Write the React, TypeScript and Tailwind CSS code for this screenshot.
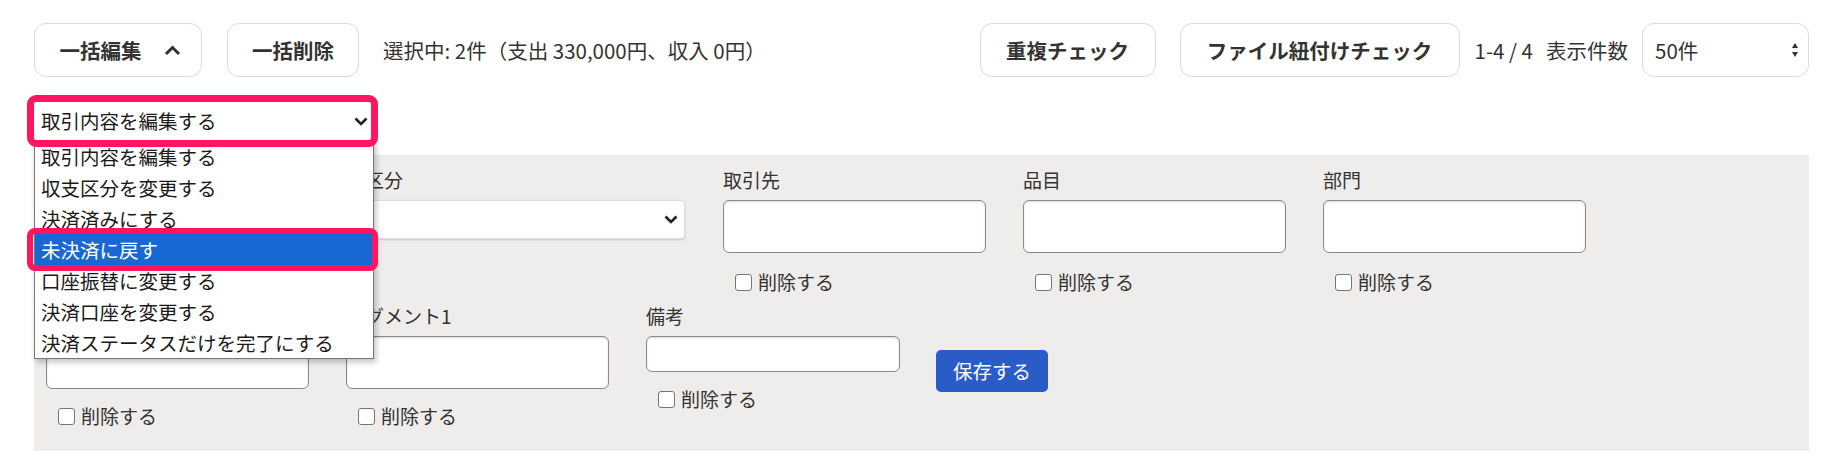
import React from "react";

const options = [
  "取引内容を編集する",
  "収支区分を変更する",
  "決済済みにする",
  "未決済に戻す",
  "口座振替に変更する",
  "決済口座を変更する",
  "決済ステータスだけを完了にする",
];

const DeleteCheck = ({ top }: { top: string }) => (
  <div className={`${top} ml-[12px] flex h-[24px] items-center gap-[6px] text-[19px] text-[#333]`}>
    <span className="h-[17px] w-[17px] rounded-[3px] border border-[#767676] bg-white" />
    <span>削除する</span>
  </div>
);

const Field = ({
  label,
  check,
  checkTop = "mt-[17px]",
  inputClass = "h-[53px] w-[263px]",
}: {
  label?: string;
  check?: boolean;
  checkTop?: string;
  inputClass?: string;
}) => (
  <div className="flex flex-col">
    <div className="mb-[8px] h-[24px] text-[19px] leading-[24px] text-[#333]">{label}</div>
    <div
      className={`${inputClass} rounded-[6px] border border-[#8a8a8a] bg-white shadow-[inset_0_1px_2px_rgba(0,0,0,0.15)]`}
    />
    {check && <DeleteCheck top={checkTop} />}
  </div>
);

const App = () => {
  return (
    <div className="h-[465px] w-[1840px] overflow-hidden bg-white pl-[34px] pr-[31px] pt-[23px] font-['Noto_Sans_CJK_JP',sans-serif] text-[#333]">
      {/* top bar */}
      <div className="flex h-[54px] items-center">
        <button className="flex h-[54px] w-[168px] items-center justify-center gap-[22px] rounded-[12px] border border-[#dcdcdc] bg-white pl-[4px] text-[20.5px] font-bold">
          <span>一括編集</span>
          <svg width="17" height="11" viewBox="0 0 17 11">
            <polyline points="2,9 8.5,2.5 15,9" fill="none" stroke="#333" strokeWidth="3" />
          </svg>
        </button>
        <button className="ml-[25px] flex h-[54px] w-[132px] items-center justify-center rounded-[12px] border border-[#dcdcdc] bg-white text-[20.5px] font-bold">
          一括削除
        </button>
        <span className="ml-[24px] text-[20.5px]">選択中: 2件（支出 330,000円、収入 0円）</span>

        <div className="ml-auto flex items-center">
          <button className="flex h-[54px] w-[176px] items-center justify-center rounded-[12px] border border-[#dcdcdc] bg-white text-[20.5px] font-bold">
            重複チェック
          </button>
          <button className="ml-[24px] flex h-[54px] w-[280px] items-center justify-center rounded-[12px] border border-[#dcdcdc] bg-white text-[20.5px] font-bold">
            ファイル紐付けチェック
          </button>
          <span className="ml-[15px] text-[20.5px]">1-4 / 4</span>
          <span className="ml-[13px] text-[20.5px]">表示件数</span>
          <div className="ml-[14px] flex h-[54px] w-[167px] items-center justify-between rounded-[12px] border border-[#dcdcdc] bg-white pl-[12px] pr-[10px] text-[20.5px]">
            <span>50件</span>
            <svg width="6" height="14" viewBox="0 0 6 14">
              <polygon points="0,5 3,0 6,5" fill="#333" />
              <polygon points="0,9 6,9 3,14" fill="#333" />
            </svg>
          </div>
        </div>
      </div>

      {/* action select with open list */}
      <div className="relative z-10 mt-[25px] h-[38px] w-[340px]">
        <div className="flex h-full items-center justify-between bg-white pl-[7px] pr-[6px] text-[19.5px] text-[#1a1a1a] shadow-[0_1px_2px_rgba(0,0,0,0.2)]">
          <span>取引内容を編集する</span>
          <svg width="14" height="9" viewBox="0 0 14 9">
            <polyline points="1.5,1.5 7,7 12.5,1.5" fill="none" stroke="#222" strokeWidth="2.6" />
          </svg>
        </div>
        <div className="pointer-events-none absolute -bottom-[7px] -left-[7px] -right-[4px] -top-[7px] z-30 rounded-[9px] border-[7px] border-[#ff1560]" />
        <div className="absolute left-0 top-[38px] z-20 w-[340px] border border-[#767676] bg-white shadow-[2px_3px_6px_rgba(0,0,0,0.25)]">
          {options.map((o) =>
            o === "未決済に戻す" ? (
              <div key={o} className="relative h-[31px] bg-[#1967d2] pl-[6px] text-[19.5px] leading-[31px] text-white">
                {o}
                <div className="absolute -bottom-[6px] -left-[8px] -right-[5px] -top-[6px] rounded-[8px] border-[6px] border-[#ff1560]" />
              </div>
            ) : (
              <div key={o} className="h-[31px] pl-[6px] text-[19.5px] leading-[31px] text-[#1a1a1a]">
                {o}
              </div>
            )
          )}
        </div>
      </div>

      {/* edit panel */}
      <div className="mt-[15px] h-[296px] w-[1775px] bg-[#eeedeb] pl-[12px] pt-[13px]">
        <div className="flex items-start">
          {/* first column sits fully under the open list */}
          <div className="w-[281px]" />
          <div className="w-[396px]">
            <div className="mb-[8px] h-[24px] text-[19px] leading-[24px] text-[#333]">収支区分</div>
            <div className="flex h-[39px] w-[358px] items-center justify-end rounded-[4px] border border-[#dedede] bg-white pr-[6px] shadow-[0_1px_2px_rgba(0,0,0,0.15)]">
              <svg width="14" height="9" viewBox="0 0 14 9">
                <polyline points="1.5,1.5 7,7 12.5,1.5" fill="none" stroke="#222" strokeWidth="2.6" />
              </svg>
            </div>
          </div>
          <div className="w-[300px]">
            <Field label="取引先" check />
          </div>
          <div className="w-[300px]">
            <Field label="品目" check />
          </div>
          <div className="w-[300px]">
            <Field label="部門" check />
          </div>
        </div>

        <div className="mt-[10px] flex items-start">
          <div className="w-[300px]">
            <Field check checkTop="mt-[15px]" />
          </div>
          <div className="w-[300px]">
            <Field label="セグメント1" check checkTop="mt-[15px]" />
          </div>
          <div className="w-[290px]">
            <Field label="備考" check checkTop="mt-[15px]" inputClass="h-[36px] w-[254px]" />
          </div>
          <button className="mt-[46px] h-[42px] w-[112px] rounded-[5px] bg-[#2b5bc7] text-[19.5px] text-white">
            保存する
          </button>
        </div>
      </div>
    </div>
  );
};

export default App;
